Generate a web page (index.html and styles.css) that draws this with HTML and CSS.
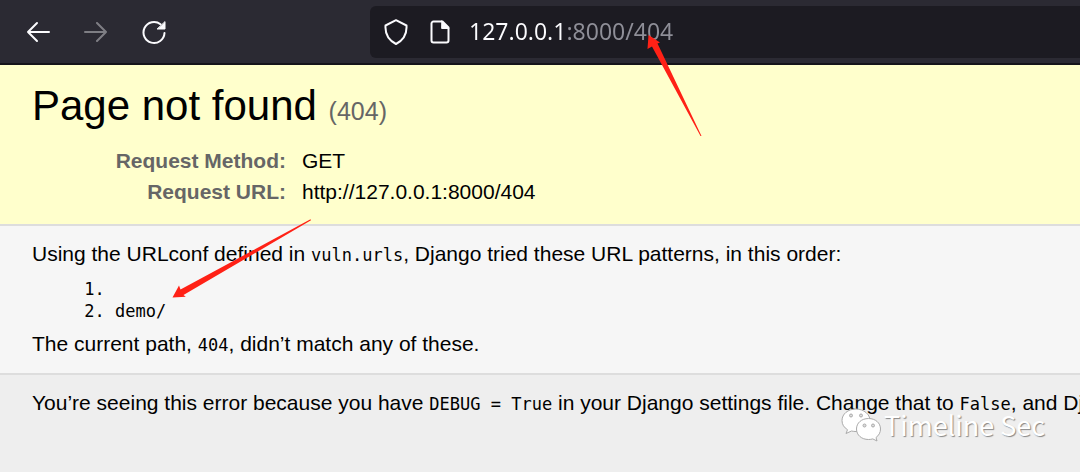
FILE: index.html
```
<!DOCTYPE html>
<html lang="en">
<head>
    <meta charset="utf-8">
    <title>Page not found at /404</title>
    <link rel="stylesheet" href="styles.css">
</head>
<body>
    <div class="toolbar">
        <div class="nav-buttons">
            <button type="button" aria-label="Back">
                <svg width="24" height="24" viewBox="0 0 24 24"><path d="M23 12H2M11 3L2 12l9 9"/></svg>
            </button>
            <button type="button" aria-label="Forward" disabled>
                <svg width="24" height="24" viewBox="0 0 24 24"><path d="M1 12h21M13 3l9 9-9 9"/></svg>
            </button>
            <button type="button" aria-label="Reload">
                <svg width="24" height="24" viewBox="0 0 24 24"><path d="M22.500 13A10.500 10.500 0 1 1 18.500 4.200"/><path class="solid" d="M23 2v7h-7.500z"/></svg>
            </button>
        </div>
        <div class="url-bar">
            <svg width="24" height="26" viewBox="0 0 24 26"><path d="M12 1.200L22.500 6.500C23 14 19.500 21 12 25 4.500 21 1 14 1.500 6.500z"/></svg>
            <svg width="20" height="24" viewBox="0 0 20 24"><path d="M3.500 1.500h9l6 6v13a2 2 0 0 1-2 2h-13a2 2 0 0 1-2-2v-17a2 2 0 0 1 2-2z"/><path class="solid" d="M12 1l7 7.500h-7z"/></svg>
            <input type="text" class="url-input" aria-label="Address" value="127.0.0.1:8000/404">
        </div>
    </div>

    <div class="summary">
        <h1>Page not found <span>(404)</span></h1>
        <table class="meta">
            <tr>
                <th scope="row">Request Method:</th>
                <td>GET</td>
            </tr>
            <tr>
                <th scope="row">Request URL:</th>
                <td>http://127.0.0.1:8000/404</td>
            </tr>
        </table>
    </div>

    <div class="info">
        <p>Using the URLconf defined in <code>vuln.urls</code>, Django tried these URL patterns, in this order:</p>
        <ol>
            <li></li>
            <li>demo/</li>
        </ol>
        <p>The current path, <code>404</code>, didn’t match any of these.</p>
    </div>

    <div class="explanation">
        <p>You’re seeing this error because you have <code>DEBUG = True</code> in your Django settings file. Change that to <code>False</code>, and Django</p>
    </div>

    <svg class="arrows" width="720" height="320" viewBox="0 0 720 320">
        <path d="M648.500 35L660 42.500 657.500 43.500 701.500 136 700.500 136 652 46.500 647.500 49z"/>
        <path d="M172.500 297.500L179 285.500 180.500 289.500 310.500 219.300 311 220.300 183.500 295 185.800 296.800z"/>
    </svg>

    <div class="watermark">
        <svg width="40" height="34" viewBox="0 0 40 34">
            <path d="M15 1C7 1 1 6 1 12.500c0 4 2 7 5.500 9.200L5 25.500l5.500-2.500c1.600.4 3 .5 4.500.5C23 23.500 29 18.500 29 12.500S23 1 15 1z"/>
            <path d="M27.500 10.500C20.500 10.500 15.500 15 15.500 21s5 10.500 12 10.500c1.500 0 3-.2 4.300-.6L36 33l-1-3.500c2.800-2 4.500-5 4.500-8.500 0-6-5-10.500-12-10.500z"/>
            <g class="eyes"><circle cx="10" cy="7.500" r="1.500"/><circle cx="20" cy="7.500" r="1.500"/><circle cx="23.500" cy="17.500" r="1.500"/><circle cx="32" cy="17.500" r="1.500"/></g>
        </svg>
        <span>Timeline Sec</span>
    </div>
</body>
</html>
```
FILE: styles.css
```
* {
    box-sizing: border-box;
}
html {
    background: #eee;
}
body {
    margin: 0;
    position: relative;
    min-height: 100vh;
    font-family: "Liberation Sans", Arial, sans-serif;
    font-size: 21px;
    line-height: 24px;
    color: #000;
    background: #eee;
}
h1, p, ol {
    margin: 0;
}
code, ol {
    font-family: "DejaVu Sans Mono", monospace;
    font-size: 17px;
}

/* browser toolbar */
.toolbar {
    display: flex;
    align-items: center;
    height: 65px;
    padding-left: 26px;
    background: #2b2a33;
    border-bottom: 2px solid #15141a;
}
.nav-buttons {
    display: flex;
    gap: 34px;
    width: 344px;
    flex: none;
}
.toolbar button {
    display: flex;
    padding: 0;
    border: none;
    background: none;
}
.toolbar svg {
    flex: none;
    fill: none;
    stroke: #fbfbfe;
    stroke-width: 2;
    stroke-linecap: round;
    stroke-linejoin: round;
}
.toolbar svg .solid {
    fill: #fbfbfe;
    stroke-width: 1;
}
.toolbar button:disabled {
    opacity: 0.4;
}
.url-bar {
    display: flex;
    align-items: center;
    flex: 1;
    gap: 22px;
    height: 52px;
    padding-left: 14px;
    background: #1c1b22;
    border-radius: 6px 0 0 6px;
}
/* host part is bright, port and path are dimmed */
.url-input {
    flex: 1;
    min-width: 0;
    height: 36px;
    margin: 0 0 2px -3px;
    padding: 0;
    border: none;
    outline: none;
    font-family: "Noto Sans", sans-serif;
    font-size: 23px;
    color: transparent;
    background: linear-gradient(to right, #fbfbfe 98px, #8f8f98 98px);
    -webkit-background-clip: text;
    background-clip: text;
}

/* error page */
.summary {
    padding: 17px 32px 13px;
    background: #ffc;
    border-bottom: 2px solid #ddd;
}
h1 {
    font-size: 42px;
    font-weight: normal;
    line-height: 48px;
}
h1 span {
    font-size: 25px;
    color: #666;
}
.meta {
    margin-top: 14px;
    border-collapse: collapse;
}
.meta th {
    width: 254px;
    padding: 0 0 7px;
    text-align: right;
    color: #666;
}
.meta td {
    padding: 0 0 7px 16px;
}
.info {
    padding: 16px 32px;
    background: #f6f6f6;
    border-bottom: 2px solid #ddd;
}
.info ol {
    margin: 11px 0 10px;
    padding-left: 83px;
    line-height: 22px;
}
.explanation {
    padding: 16px 0 16px 32px;
    white-space: nowrap;
    overflow: hidden;
}

.arrows {
    position: absolute;
    top: 0;
    left: 0;
    fill: #ff2116;
    pointer-events: none;
}
.watermark {
    position: absolute;
    right: 35px;
    bottom: 29px;
    display: flex;
    align-items: center;
    gap: 3px;
    font-family: "Noto Sans CJK SC", sans-serif;
    font-size: 27px;
    line-height: 36px;
    color: #fff;
    text-shadow: 1px 1px 1px #888;
}
.watermark svg {
    fill: #fff;
    stroke: #aaa;
    stroke-width: 1;
}
.watermark .eyes {
    fill: #ddd;
}
```
